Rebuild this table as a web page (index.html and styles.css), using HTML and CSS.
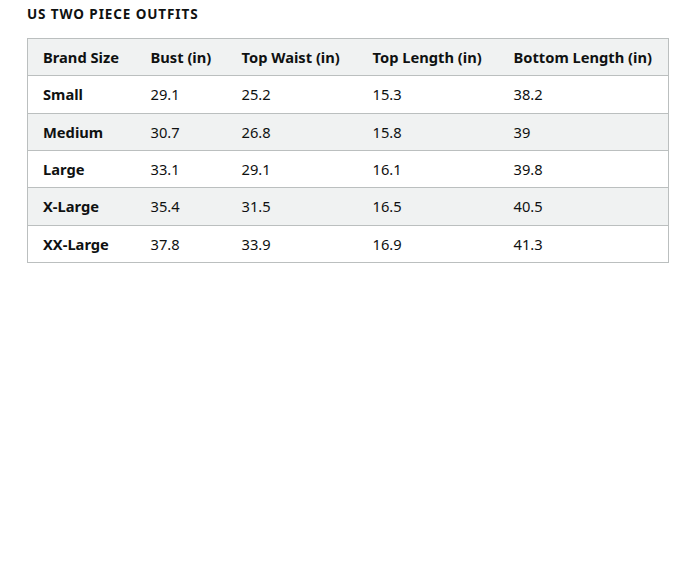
FILE: index.html
```html
<!DOCTYPE html>
<html>
<head>
<meta charset="utf-8">
<link rel="stylesheet" href="styles.css">
</head>
<body>
<div class="wrap">
  <h2 class="title">US TWO PIECE OUTFITS</h2>
  <table class="size-table">
    <colgroup>
      <col class="c1"><col class="c2"><col class="c3"><col class="c4"><col class="c5">
    </colgroup>
    <tr class="alt"><th>Brand Size</th><th>Bust (in)</th><th>Top Waist (in)</th><th>Top Length (in)</th><th>Bottom Length (in)</th></tr>
    <tr><th>Small</th><td>29.1</td><td>25.2</td><td>15.3</td><td>38.2</td></tr>
    <tr class="alt"><th>Medium</th><td>30.7</td><td>26.8</td><td>15.8</td><td>39</td></tr>
    <tr><th>Large</th><td>33.1</td><td>29.1</td><td>16.1</td><td>39.8</td></tr>
    <tr class="alt"><th>X-Large</th><td>35.4</td><td>31.5</td><td>16.5</td><td>40.5</td></tr>
    <tr><th>XX-Large</th><td>37.8</td><td>33.9</td><td>16.9</td><td>41.3</td></tr>
  </table>
</div>
</body>
</html>
```
FILE: styles.css
```css
html, body {
  margin: 0;
  padding: 0;
  background: #ffffff;
}
body {
  font-family: "Noto Sans", "Open Sans", sans-serif;
  color: #0f1111;
}
.wrap {
  padding: 4px 23px 0 27px;
}
.title {
  margin: 0 0 14px 0;
  font-size: 13.5px;
  font-weight: 700;
  line-height: 20px;
  letter-spacing: 0.9px;
}
.size-table {
  border-collapse: collapse;
  table-layout: fixed;
  width: 642px;
  border: 1px solid #bbbfbf;
  font-size: 14.7px;
  line-height: 20px;
}
.c1 { width: 108px; }
.c2 { width: 91px; }
.c3 { width: 131px; }
.c4 { width: 141px; }
.c5 { width: 170px; }
.size-table tr {
  height: 37.33px;
  border-top: 1px solid #bbbfbf;
}
.size-table tr.alt {
  background: #f0f2f2;
}
.size-table th, .size-table td {
  padding: 0 0 0 15px;
  text-align: left;
  vertical-align: middle;
  white-space: nowrap;
}
.size-table th {
  font-weight: 700;
}
.size-table td {
  font-weight: 400;
}
```
